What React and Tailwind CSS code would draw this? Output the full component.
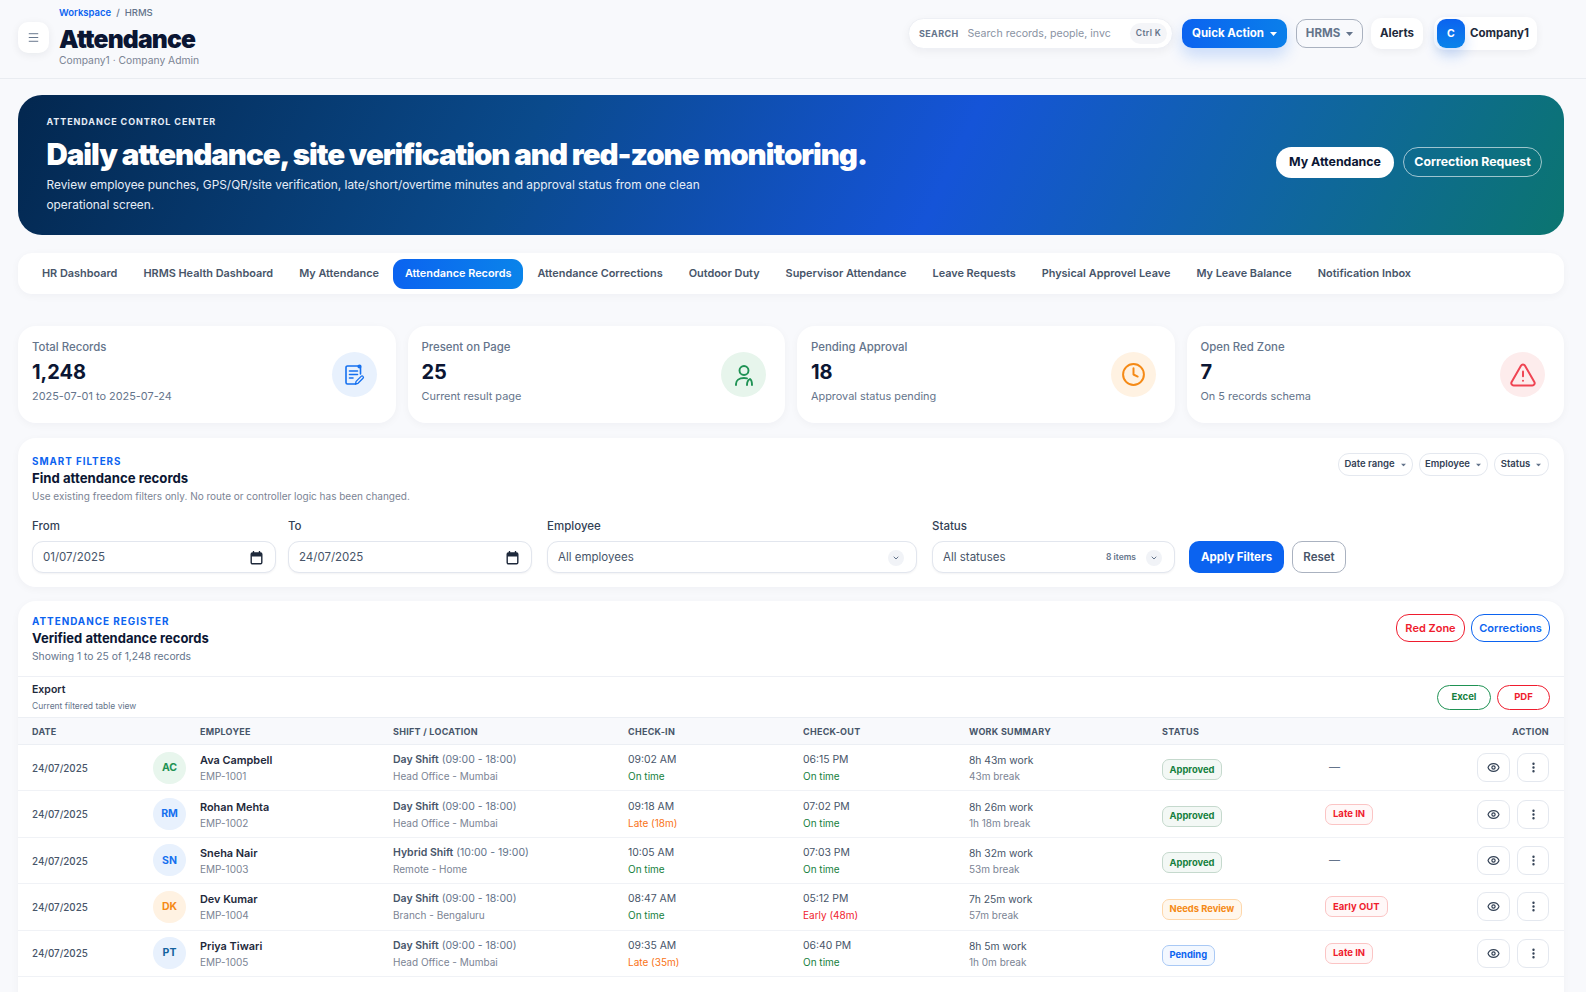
import React from "react";
import { Menu, Clock, TriangleAlert, Eye, EllipsisVertical, ChevronDown } from "lucide-react";

const Caret = ({ className = "" }) => (
  <svg width="7" height="4" viewBox="0 0 7 4" className={className}><path d="M0 0h7L3.5 4z" fill="currentColor" /></svg>
);

const CalendarIcon = () => (
  <svg width="13" height="14" viewBox="0 0 13 14" fill="none" className="text-[#1e293b]">
    <path d="M3.500 0.500v2M9.500 0.500v2" stroke="currentColor" strokeWidth="1.400" strokeLinecap="round" />
    <rect x="1.200" y="2" width="10.600" height="10.800" rx="1.200" stroke="currentColor" strokeWidth="1.400" />
    <path d="M1.200 3.200a1.200 1.200 0 0 1 1.200-1.200h8.200a1.200 1.200 0 0 1 1.200 1.200V5.500H1.200z" fill="currentColor" />
  </svg>
);

const DocIcon = () => (
  <svg width="24" height="24" viewBox="0 0 24 24" fill="none" stroke="#1570ef" strokeWidth="1.600" strokeLinecap="round" strokeLinejoin="round">
    <path d="M18.500 11V4.500A1.500 1.500 0 0 0 17 3H5.500A1.500 1.500 0 0 0 4 4.500v15A1.500 1.500 0 0 0 5.500 21h8" />
    <circle cx="17.500" cy="3.500" r="1.300" />
    <path d="M7.500 8h8M7.500 11.500h8M7.500 15h3.500" />
    <path d="M13.500 21l.6-2.600 5-5a1.300 1.300 0 0 1 1.900 1.900l-5 5z" strokeWidth="1.300" />
  </svg>
);

const PersonIcon = () => (
  <svg width="24" height="24" viewBox="0 0 24 24" fill="none" stroke="#1f9254" strokeWidth="1.900" strokeLinecap="round">
    <circle cx="12" cy="7.500" r="4.500" />
    <path d="M4 22v-1c0-3.500 3-6 8-6 1 0 2 .1 3 .4M15 22c0-2.500 1-5 3-6 1.300.9 2 3 2 6" />
  </svg>
);

const tabs = ["HR Dashboard", "HRMS Health Dashboard", "My Attendance", "Attendance Records", "Attendance Corrections", "Outdoor Duty", "Supervisor Attendance", "Leave Requests", "Physical Approvel Leave", "My Leave Balance", "Notification Inbox"];

const stats = [
  { label: "Total Records", value: "1,248", sub: "2025-07-01 to 2025-07-24", bg: "bg-[#e8f1fd]", icon: <DocIcon /> },
  { label: "Present on Page", value: "25", sub: "Current result page", bg: "bg-[#e7f5ec]", icon: <PersonIcon /> },
  { label: "Pending Approval", value: "18", sub: "Approval status pending", bg: "bg-[#fff2e2]", icon: <Clock size={25} strokeWidth={1.900} className="text-[#f58a16]" /> },
  { label: "Open Red Zone", value: "7", sub: "On 5 records schema", bg: "bg-[#fdecec]", icon: <TriangleAlert size={28} strokeWidth={1.700} className="text-[#ef4452]" /> },
];

const green = "text-[#15803d]";
const amber = "text-[#f97316]";
const red = "text-[#ef1c2e]";

const rows = [
  { i: "AC", ic: "bg-[#e8f6ed] text-[#1f9254]", name: "Ava Campbell", id: "EMP-1001", shift: "Day Shift", time: "(09:00 - 18:00)", loc: "Head Office - Mumbai", cin: "09:02 AM", cins: "On time", cinc: green, cout: "06:15 PM", couts: "On time", coutc: green, work: "8h 43m work", brk: "43m break", status: "Approved", rz: null },
  { i: "RM", ic: "bg-[#e8f1fd] text-[#1570ef]", name: "Rohan Mehta", id: "EMP-1002", shift: "Day Shift", time: "(09:00 - 18:00)", loc: "Head Office - Mumbai", cin: "09:18 AM", cins: "Late (18m)", cinc: amber, cout: "07:02 PM", couts: "On time", coutc: green, work: "8h 26m work", brk: "1h 18m break", status: "Approved", rz: "Late IN" },
  { i: "SN", ic: "bg-[#e8f1fd] text-[#1570ef]", name: "Sneha Nair", id: "EMP-1003", shift: "Hybrid Shift", time: "(10:00 - 19:00)", loc: "Remote - Home", cin: "10:05 AM", cins: "On time", cinc: green, cout: "07:03 PM", couts: "On time", coutc: green, work: "8h 32m work", brk: "53m break", status: "Approved", rz: null },
  { i: "DK", ic: "bg-[#fff2e2] text-[#f58a16]", name: "Dev Kumar", id: "EMP-1004", shift: "Day Shift", time: "(09:00 - 18:00)", loc: "Branch - Bengaluru", cin: "08:47 AM", cins: "On time", cinc: green, cout: "05:12 PM", couts: "Early (48m)", coutc: red, work: "7h 25m work", brk: "57m break", status: "Needs Review", rz: "Early OUT" },
  { i: "PT", ic: "bg-[#e8f1fd] text-[#14639f]", name: "Priya Tiwari", id: "EMP-1005", shift: "Day Shift", time: "(09:00 - 18:00)", loc: "Head Office - Mumbai", cin: "09:35 AM", cins: "Late (35m)", cinc: amber, cout: "06:40 PM", couts: "On time", coutc: green, work: "8h 5m work", brk: "1h 0m break", status: "Pending", rz: "Late IN" },
];

const statusStyle = {
  Approved: "border-[#c5d9cd] bg-[#f3f8f5] text-[#15803d]",
  "Needs Review": "border-[#fed7aa] bg-[#fff7ed] text-[#f58a16]",
  Pending: "border-[#a9c9f5] bg-[#f3f8ff] text-[#0b63f0]",
};

const gridCols = "grid grid-cols-[121px_240px_235px_175px_166px_193px_163px_1fr]";

const Field = ({ label, className, children }) => (
  <div className={className}>
    <div className="text-[11.5px] font-medium leading-[14px] text-[#334155] mb-[8px]">{label}</div>
    <div className="h-[32px] rounded-[11px] border border-[#e2e6ee] bg-white shadow-[0_1px_2px_rgba(15,23,42,0.05)] flex items-center text-[11.5px] text-[#475569] pl-[10px] pr-[12px] pt-[1px]">{children}</div>
  </div>
);

const Chip = ({ children, className }) => (
  <span className={`h-[23px] rounded-[11px] border border-[#e4e8ef] bg-white flex items-center justify-center gap-[5px] text-[9.5px] font-semibold text-[#334155] ${className}`}>
    {children}
    <Caret className="text-[#64748b] scale-75" />
  </span>
);

export default function App() {
  return (
    <div className="h-[992px] overflow-hidden bg-[#f8f9fc] font-['Inter','Liberation_Sans',sans-serif] text-[#0f172a]">
      <header className="h-[79px] border-b border-[#e9ecf1] flex items-start justify-between pl-[18px] pr-[49px]">
        <div className="flex items-center gap-[10px] pt-[7px]">
          <button className="w-[31px] h-[31px] rounded-[10px] bg-white shadow-[0_2px_8px_rgba(15,23,42,0.07)] flex items-center justify-center text-[#64748b]">
            <Menu size={13} strokeWidth={1.800} />
          </button>
          <div>
            <div className="text-[9.5px] leading-[12px] font-medium text-[#64748b]"><span className="text-[#0b63f0] font-semibold">Workspace</span><span className="mx-[5px]">/</span>HRMS</div>
            <h1 className="text-[24.7px] leading-[30px] font-black tracking-[-0.035em] text-[#0b1633] mt-[5px]">Attendance</h1>
            <div className="text-[10.3px] leading-[14px] text-[#7b8494] -mt-[1px]">Company1 · Company Admin</div>
          </div>
        </div>
        <div className="flex items-center pt-[17px]">
          <div className="w-[265px] h-[31px] rounded-full bg-white border border-[#eef0f5] shadow-[0_3px_10px_rgba(15,23,42,0.05)] flex items-center pl-[10px] pr-[5px] mr-[9px]">
            <span className="text-[9px] font-bold tracking-[0.04em] text-[#64748b]">SEARCH</span>
            <span className="ml-[9px] text-[10.6px] text-[#8a93a3] flex-1">Search records, people, invc</span>
            <span className="h-[21px] px-[6px] rounded-full bg-[#f4f5f8] text-[8.5px] tracking-[0.04em] font-semibold text-[#64748b] flex items-center">Ctrl K</span>
          </div>
          <button className="w-[105px] h-[29px] rounded-[10px] bg-[linear-gradient(90deg,#0b63f0,#0a7fea)] text-white text-[11.5px] font-bold flex items-center justify-center gap-[6px] shadow-[0_8px_16px_rgba(11,99,240,0.2)] mr-[9px]">Quick Action <Caret /></button>
          <button className="w-[67px] h-[29px] rounded-[10px] border border-[#a9b1bf] text-[#64748b] text-[11.5px] font-bold flex items-center justify-center gap-[6px] mr-[8px]">HRMS <Caret /></button>
          <button className="w-[52px] h-[31px] rounded-[10px] bg-white shadow-[0_2px_8px_rgba(15,23,42,0.06)] text-[11.5px] font-bold text-[#1e293b] mr-[11px]">Alerts</button>
          <div className="w-[103px] h-[33px] rounded-[10px] bg-white shadow-[0_2px_8px_rgba(15,23,42,0.06)] flex items-center pl-[3px]">
            <span className="w-[28px] h-[29px] rounded-[9px] bg-[linear-gradient(180deg,#0b63f0,#0a84ea)] text-white text-[10.5px] font-bold flex items-center justify-center shadow-[0_8px_14px_rgba(11,99,240,0.2)]">C</span>
            <span className="ml-[5px] text-[11.5px] font-bold text-[#1e293b]">Company1</span>
          </div>
        </div>
      </header>

      <main className="pl-[18px] pr-[22px] pt-[16px]">
        <section className="h-[140px] rounded-[24px] bg-[linear-gradient(115deg,#03274f_0%,#0a4a8c_33%,#1554d8_60%,#0b7570_100%)] pl-[28.5px] pr-[22px] flex items-center justify-between text-white">
          <div className="w-[700px]">
            <div className="text-[9px] leading-[12px] font-bold tracking-[0.1em] text-[#e6edf7] mt-[1px]">ATTENDANCE CONTROL CENTER</div>
            <h2 className="text-[29.5px] leading-[36px] font-black tracking-[-0.035em] whitespace-nowrap mt-[8px]">Daily attendance, site verification and red-zone monitoring.</h2>
            <p className="text-[11.87px] leading-[20px] text-[#e6edf7] mt-[3px] w-[665px]">Review employee punches, GPS/QR/site verification, late/short/overtime minutes and approval status from one clean operational screen.</p>
          </div>
          <div className="flex items-center gap-[9px] mb-[6px]">
            <button className="w-[118px] h-[31px] rounded-full bg-white text-[#0b1633] text-[12.4px] font-bold">My Attendance</button>
            <button className="w-[139px] h-[30px] rounded-full border border-white/60 text-white text-[12.3px] font-bold">Correction Request</button>
          </div>
        </section>

        <nav className="mt-[18px] h-[41px] rounded-[14px] bg-white shadow-[0_2px_8px_rgba(15,23,42,0.04)] flex items-center gap-[2px] px-[12px]">
          {tabs.map((t) => (
            <span key={t} className={t === "Attendance Records" ? "h-[30px] px-[12px] rounded-[11px] bg-[linear-gradient(90deg,#0b63f0,#0a84ea)] text-white text-[10.9px] font-semibold flex items-center" : "px-[12px] text-[10.9px] font-semibold text-[#475569] whitespace-nowrap"}>{t}</span>
          ))}
        </nav>

        <section className="mt-[32px] grid grid-cols-4 gap-[12px]">
          {stats.map((s) => (
            <div key={s.label} className="h-[97px] rounded-[18px] bg-white shadow-[0_2px_8px_rgba(15,23,42,0.04)] pl-[14px] pr-[19px] flex items-center justify-between">
              <div className="-mt-[7px]">
                <div className="text-[11.4px] leading-[16px] font-medium text-[#64748b]">{s.label}</div>
                <div className="text-[20px] leading-[26px] font-bold text-[#0b1633] mt-[4px]">{s.value}</div>
                <div className="text-[10.9px] leading-[16px] text-[#64748b] mt-[3px]">{s.sub}</div>
              </div>
              <div className={`w-[45px] h-[45px] rounded-full flex items-center justify-center ${s.bg}`}>{s.icon}</div>
            </div>
          ))}
        </section>

        <section className="mt-[15px] h-[149px] rounded-[18px] bg-white shadow-[0_2px_8px_rgba(15,23,42,0.04)] px-[14px] pt-[15px]">
          <div className="flex items-start justify-between">
            <div>
              <div className="text-[9.8px] leading-[14px] font-bold tracking-[0.1em] text-[#0b63f0] mt-[2px]">SMART FILTERS</div>
              <div className="text-[13.2px] leading-[18px] font-bold text-[#0b1633]">Find attendance records</div>
              <div className="text-[10px] leading-[14px] text-[#7b8494] mt-[2px]">Use existing freedom filters only. No route or controller logic has been changed.</div>
            </div>
            <div className="flex gap-[6px] mr-[1px]">
              <Chip className="w-[75px]">Date range</Chip>
              <Chip className="w-[69px]">Employee</Chip>
              <Chip className="w-[55px]">Status</Chip>
            </div>
          </div>
          <div className="flex items-end mt-[16px]">
            <Field label="From" className="w-[244px] mr-[12px]">
              <span className="flex-1">01/07/2025</span><CalendarIcon />
            </Field>
            <Field label="To" className="w-[244px] mr-[15px]">
              <span className="flex-1">24/07/2025</span><CalendarIcon />
            </Field>
            <Field label="Employee" className="w-[370px] mr-[15px]">
              <span className="flex-1">All employees</span>
              <span className="w-[16px] h-[16px] rounded-full bg-[#f1f3f7] flex items-center justify-center"><ChevronDown size={8} strokeWidth={3} className="text-[#64748b]" /></span>
            </Field>
            <Field label="Status" className="w-[243px] mr-[14px]">
              <span className="flex-1">All statuses</span>
              <span className="text-[8.5px] font-semibold text-[#64748b] mr-[10px]">8 items</span>
              <span className="w-[16px] h-[16px] rounded-full bg-[#f1f3f7] flex items-center justify-center"><ChevronDown size={8} strokeWidth={3} className="text-[#64748b]" /></span>
            </Field>
            <button className="w-[95px] h-[32px] rounded-[10px] bg-[#0b63f0] text-white text-[11.5px] font-bold pt-[1px] mr-[8px]">Apply Filters</button>
            <button className="w-[54px] h-[32px] rounded-[10px] border border-[#aab2c0] text-[#475569] text-[11.5px] font-semibold pt-[1px]">Reset</button>
          </div>
        </section>

        <section className="mt-[14px] rounded-t-[18px] bg-white shadow-[0_2px_8px_rgba(15,23,42,0.04)] h-[420px]">
          <div className="h-[76px] border-b border-[#eef0f5] flex items-start justify-between px-[14px] pt-[13px]">
            <div>
              <div className="text-[9.9px] leading-[14px] font-bold tracking-[0.1em] text-[#0b63f0]">ATTENDANCE REGISTER</div>
              <div className="text-[13px] leading-[18px] font-bold text-[#0b1633] mt-[1px]">Verified attendance records</div>
              <div className="text-[10.3px] leading-[14px] text-[#64748b] mt-[2px]">Showing 1 to 25 of 1,248 records</div>
            </div>
            <div className="flex gap-[6px]">
              <button className="w-[69px] h-[28px] rounded-[13px] border border-[#ef1c2e] text-[#ef1c2e] text-[11px] font-semibold">Red Zone</button>
              <button className="w-[79px] h-[28px] rounded-[13px] border border-[#0b63f0] text-[#0b63f0] text-[11px] font-semibold">Corrections</button>
            </div>
          </div>
          <div className="h-[40px] flex items-center justify-between px-[14px]">
            <div>
              <div className="text-[10.5px] leading-[14px] font-semibold text-[#1e293b]">Export</div>
              <div className="text-[8.5px] leading-[12px] text-[#64748b] mt-[3px]">Current filtered table view</div>
            </div>
            <div className="flex gap-[6px]">
              <button className="w-[54px] h-[25px] rounded-[13px] border border-[#1f9254] text-[#15803d] text-[9.5px] font-bold">Excel</button>
              <button className="w-[53px] h-[25px] rounded-[13px] border border-[#ef1c2e] text-[#ef1c2e] text-[9.5px] font-bold">PDF</button>
            </div>
          </div>
          <div className={`${gridCols} h-[28px] items-center bg-[#f8f9fc] border-y border-[#eceff4] pl-[14px] pr-[15px] pt-[1px] text-[9px] font-bold tracking-[0.03em] text-[#475569]`}>
            <span>DATE</span>
            <span className="pl-[47px]">EMPLOYEE</span>
            <span>SHIFT / LOCATION</span>
            <span>CHECK-IN</span>
            <span>CHECK-OUT</span>
            <span>WORK SUMMARY</span>
            <span>STATUS</span>
            <span className="text-right">ACTION</span>
          </div>
          {rows.map((r) => (
            <div key={r.id} className={`${gridCols} h-[46.4px] items-center border-b border-[#f0f2f6] pl-[14px] pr-[15px]`}>
              <span className="text-[9.8px] text-[#475569] font-medium pt-[3px]">24/07/2025</span>
              <div className="flex items-center gap-[14px]">
                <span className={`w-[33px] h-[32px] rounded-full flex items-center justify-center text-[10.5px] font-bold ${r.ic}`}>{r.i}</span>
                <div>
                  <div className="text-[10.9px] leading-[16px] font-semibold text-[#1e293b]">{r.name}</div>
                  <div className="text-[10px] leading-[14px] mt-[1px] text-[#7b8494]">{r.id}</div>
                </div>
              </div>
              <div>
                <div className="text-[10.5px] leading-[16px] text-[#64748b]"><span className="font-semibold text-[#475569]">{r.shift}</span> {r.time}</div>
                <div className="text-[10px] leading-[14px] mt-[1px] text-[#7b8494]">{r.loc}</div>
              </div>
              <div>
                <div className="text-[10.4px] leading-[16px] text-[#475569]">{r.cin}</div>
                <div className={`text-[10px] leading-[14px] mt-[1px] ${r.cinc}`}>{r.cins}</div>
              </div>
              <div>
                <div className="text-[10.4px] leading-[16px] text-[#475569]">{r.cout}</div>
                <div className={`text-[10px] leading-[14px] mt-[1px] ${r.coutc}`}>{r.couts}</div>
              </div>
              <div>
                <div className="text-[10.3px] leading-[16px] text-[#475569]">{r.work}</div>
                <div className="text-[10px] leading-[14px] mt-[1px] text-[#7b8494]">{r.brk}</div>
              </div>
              <div>
                <span className={`inline-flex items-center h-[21px] px-[6.5px] rounded-[7px] border text-[9.4px] font-bold ${statusStyle[r.status]}`}>{r.status}</span>
              </div>
              <div className="flex items-center justify-between">
                {r.rz ? (
                  <span className="inline-flex items-center h-[21px] px-[7px] rounded-[7px] border border-[#fbc4c4] bg-[#fff8f8] text-[#ef1c2e] text-[9.5px] font-bold">{r.rz}</span>
                ) : (
                  <span className="ml-[4px] text-[11px] text-[#64748b]">—</span>
                )}
                <div className="flex gap-[7px]">
                  <button className="w-[33px] h-[29px] rounded-[9px] border border-[#e4e8ef] bg-white flex items-center justify-center text-[#334155]"><Eye size={13} strokeWidth={2.200} /></button>
                  <button className="w-[32px] h-[29px] rounded-[9px] border border-[#e4e8ef] bg-white flex items-center justify-center text-[#334155]"><EllipsisVertical size={13} strokeWidth={2.400} /></button>
                </div>
              </div>
            </div>
          ))}
        </section>
      </main>
    </div>
  );
}
